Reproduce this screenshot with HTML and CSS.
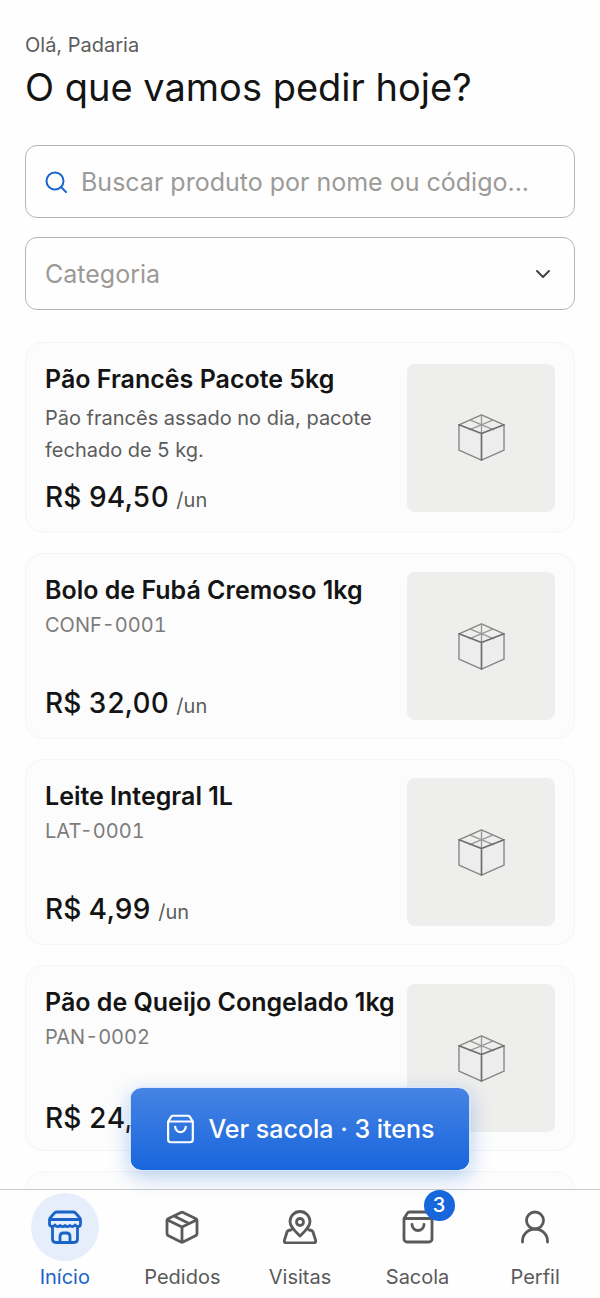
FILE: index.html
```html
<!DOCTYPE html>
<html lang="pt-BR">
<head>
    <meta charset="UTF-8">
    <meta name="viewport" content="width=device-width, initial-scale=1">
    <title>Início</title>
    <link rel="stylesheet" href="styles.css">
</head>
<body>

<!-- shared icons -->
<svg class="sprite" aria-hidden="true">
    <symbol id="bag" viewBox="0 0 34 34">
        <path d="M3 8.500h28V29a3 3 0 0 1-3 3H6a3 3 0 0 1-3-3zM3 8.500l3.500-5.500q.7-1 2-1h17q1.300 0 2 1L31 8.500M11 14.500a6 6 0 0 0 12 0"/>
    </symbol>
    <symbol id="box" viewBox="0 0 48 48">
        <path class="box-face" d="M1 12 24 21 47 12V37L24 47 1 37z"/>
        <path d="M24 1 47 11V37L24 47 1 37V11z"/>
        <path class="box-inner" d="M24 1v19M12 6l24 10M36 6 12 16"/>
        <path class="box-edge" d="M1 11l23 9 23-9M24 20v27"/>
    </symbol>
</svg>

<div class="app">
    <main class="content">
        <header>
            <p class="greeting">Olá, Padaria</p>
            <h1>O que vamos pedir hoje?</h1>
        </header>

        <form class="filters">
            <label class="field">
                <svg class="search-icon" viewBox="0 0 22 22" aria-hidden="true"><circle cx="10" cy="10" r="8.500"/><path d="m16 16 5 5"/></svg>
                <input type="search" aria-label="Buscar produto" placeholder="Buscar produto por nome ou código...">
            </label>
            <label class="field">
                <select aria-label="Categoria">
                    <option>Categoria</option>
                    <option>Confeitaria</option>
                    <option>Laticínios</option>
                    <option>Pães</option>
                </select>
                <svg class="chevron" viewBox="0 0 16 10" aria-hidden="true"><path d="m2 2 6 6 6-6"/></svg>
            </label>
        </form>

        <section class="products">
            <article class="card">
                <div class="info">
                    <h2>Pão Francês Pacote 5kg</h2>
                    <p class="description">Pão francês assado no dia, pacote fechado de 5 kg.</p>
                    <p class="price">R$ 94,50 <span class="unit">/un</span></p>
                </div>
                <div class="thumb"><svg><use href="#box"/></svg></div>
            </article>
            <article class="card">
                <div class="info">
                    <h2>Bolo de Fubá Cremoso 1kg</h2>
                    <p class="code">CONF-0001</p>
                    <p class="price">R$ 32,00 <span class="unit">/un</span></p>
                </div>
                <div class="thumb"><svg><use href="#box"/></svg></div>
            </article>
            <article class="card">
                <div class="info">
                    <h2>Leite Integral 1L</h2>
                    <p class="code">LAT-0001</p>
                    <p class="price">R$ 4,99 <span class="unit">/un</span></p>
                </div>
                <div class="thumb"><svg><use href="#box"/></svg></div>
            </article>
            <article class="card">
                <div class="info">
                    <h2>Pão de Queijo Congelado 1kg</h2>
                    <p class="code">PAN-0002</p>
                    <p class="price">R$ 24,</p>
                </div>
                <div class="thumb"><svg><use href="#box"/></svg></div>
            </article>
            <article class="card card-empty"></article>
        </section>
    </main>

    <div class="bottom">
        <button class="view-bag" type="button">
            <svg aria-hidden="true"><use href="#bag"/></svg>
            Ver sacola · 3 itens
        </button>

        <nav class="tabs">
            <a class="tab active" href="#inicio">
                <span class="tab-icon">
                    <svg viewBox="0 0 34 34"><path d="M9 2h16q1.500 0 2.500 1l4 4.500q1 1 1 2.500v4q0 2.500-2.500 2.500-2 0-3-1.500-1.200 1.500-2.600 1.500T21.800 15.500q-1.200 1.200-2.500 1.200T17 15.500q-1.200 1.200-2.500 1.200T12.200 15.500Q11 16.700 9.600 16.700T7 15q-1 1.500-3 1.500-2.500 0-2.500-2.500v-4q0-1.500 1-2.500l4-4.500q1-1 2.500-1zM2 9.500h30M4.500 17v12q0 3.500 3.500 3.500h18q3.500 0 3.500-3.500V17M12 32v-5.500q0-3.500 3.500-3.500h3q3.500 0 3.500 3.500V32"/></svg>
                </span>
                Início
            </a>
            <a class="tab" href="#pedidos">
                <span class="tab-icon">
                    <svg viewBox="0 0 34 34"><path d="M16 2.500q1-.5 2 0l12.500 6q1.500.7 1.500 2v13q0 1.500-1.500 2.200L18 32q-1 .5-2 0L3.500 25.700Q2 25 2 23.500v-13q0-1.300 1.500-2zM2.500 10 17 17l14.500-7M17 17v15M9 6l15 7.500"/></svg>
                </span>
                Pedidos
            </a>
            <a class="tab" href="#visitas">
                <span class="tab-icon">
                    <svg viewBox="0 0 34 34"><path d="M17 26C12 21 7 17 7 11.500a10 10 0 0 1 20 0C27 17 22 21 17 26z"/><circle cx="17" cy="12" r="3.500"/><path d="M8 20q-3 0-4 2L1.500 30q-.8 3 2 3h27q2.800 0 2-3L30 22q-1-2-4-2"/></svg>
                </span>
                Visitas
            </a>
            <a class="tab" href="#sacola">
                <span class="tab-icon">
                    <svg><use href="#bag"/></svg>
                    <span class="badge">3</span>
                </span>
                Sacola
            </a>
            <a class="tab" href="#perfil">
                <span class="tab-icon">
                    <svg viewBox="0 0 34 34"><circle cx="17" cy="10.500" r="8.500"/><path d="M4.500 32v-1a12.500 12 0 0 1 25 0v1"/></svg>
                </span>
                Perfil
            </a>
        </nav>
    </div>
</div>

</body>
</html>
```
FILE: styles.css
```css
* {
    box-sizing: border-box;
}

body {
    margin: 0;
    font-family: Inter, "Liberation Sans", sans-serif;
    font-size: 20px;
    color: #141414;
    background-color: #fefefe;
}

h1, h2, p {
    margin: 0;
}

svg {
    display: block;
    fill: none;
    stroke: currentColor;
    stroke-width: 2.8;
    stroke-linecap: round;
    stroke-linejoin: round;
}

.sprite {
    position: absolute;
    width: 0;
    height: 0;
}

.app {
    display: flex;
    flex-direction: column;
    height: 100vh;
}

.content {
    flex: 1;
    min-height: 0;
    overflow-y: auto;
    scrollbar-width: none;
    padding: 31px 25px 0;
}

.greeting {
    line-height: 28px;
    color: #5c5c5c;
}

h1 {
    font-size: 38px;
    font-weight: 400;
    line-height: 56px;
}

.filters {
    display: grid;
    gap: 19px;
    margin: 30px 0 32px;
}

.field {
    display: flex;
    align-items: center;
    gap: 14px;
    height: 73px;
    padding: 0 19px;
    border: 1px solid #b5b5b5;
    border-radius: 12px;
}

.field input, .field select {
    flex: 1;
    min-width: 0;
    padding: 0;
    border: 0;
    outline: 0;
    appearance: none;
    background: none;
    font-family: inherit;
    font-size: 25px;
    color: #9c9a96;
}

.field input::placeholder {
    color: #9c9a96;
}

.search-icon {
    width: 22px;
    height: 22px;
    color: #1a66cc;
    stroke-width: 2;
}

.chevron {
    width: 16px;
    height: 10px;
    margin-right: 4px;
    color: #444;
    stroke-width: 2;
}

.products {
    display: grid;
    gap: 20px;
}

.card {
    display: flex;
    align-items: center;
    gap: 12px;
    padding: 18px 19px;
    background-color: #fcfcfc;
    border: 1px solid #f5f5f5;
    border-radius: 18px;
}

.card-empty {
    height: 186px;
}

.info {
    display: flex;
    flex-direction: column;
    align-self: stretch;
    flex: 1;
    min-width: 0;
}

h2 {
    font-size: 25px;
    font-weight: 600;
    line-height: 36px;
    white-space: nowrap;
}

.description {
    margin: 5px 0 17px;
    line-height: 32px;
    color: #5c5c5c;
}

.code {
    line-height: 34px;
    color: #7c7c7c;
    font-variant-numeric: tabular-nums;
}

.price {
    margin-top: auto;
    font-size: 28px;
    font-weight: 500;
    line-height: 28px;
    font-variant-numeric: tabular-nums;
}

.unit {
    font-size: 20px;
    font-weight: 400;
    color: #5c5c5c;
}

.thumb {
    display: flex;
    align-items: center;
    justify-content: center;
    flex: none;
    width: 148px;
    height: 148px;
    background-color: #eeeeec;
    border-radius: 8px;
}

.thumb svg {
    width: 47px;
    height: 47px;
    color: #858585;
    stroke-width: 1.4;
}

.box-face {
    fill: #ededed;
    stroke: none;
}

.box-inner {
    stroke: #999;
}

.box-edge {
    stroke: #6c6c6c;
    stroke-width: 1.7;
}

.bottom {
    position: relative;
}

/* floats over the product list */
.view-bag {
    position: absolute;
    bottom: 100%;
    left: 50%;
    display: flex;
    align-items: center;
    gap: 13px;
    height: 84px;
    margin-bottom: 18px;
    padding: 0 35px;
    transform: translateX(-50%);
    border: 1px solid #d9e8fc;
    border-radius: 12px;
    background: linear-gradient(#4683e4, #1866dc) padding-box;
    box-shadow: 0 6px 20px rgba(24, 102, 220, .3);
    color: #fff;
    font-family: inherit;
    font-size: 25px;
    font-weight: 500;
    white-space: nowrap;
    cursor: pointer;
}

.view-bag svg {
    width: 30px;
    height: 30px;
    stroke-width: 2.5;
}

.tabs {
    display: flex;
    padding: 3px 6px 6px;
    background-color: #fefefe;
    border-top: 1px solid #c9c9c9;
}

.tab {
    flex: 1;
    display: flex;
    flex-direction: column;
    align-items: center;
    gap: 1px;
    line-height: 30px;
    color: #5a5a5a;
    text-decoration: none;
}

.tab-icon {
    position: relative;
    display: flex;
    align-items: center;
    justify-content: center;
    width: 68px;
    height: 68px;
    border-radius: 50%;
}

.tab-icon svg {
    width: 34px;
    height: 34px;
}

.tab.active {
    color: #1a63c9;
}

.active .tab-icon {
    background-color: #e6eefc;
}

.badge {
    position: absolute;
    top: -3px;
    right: -3px;
    width: 31px;
    height: 31px;
    border-radius: 50%;
    background-color: #1866dc;
    color: #fff;
    font-size: 20px;
    font-weight: 500;
    line-height: 31px;
    text-align: center;
}
```
